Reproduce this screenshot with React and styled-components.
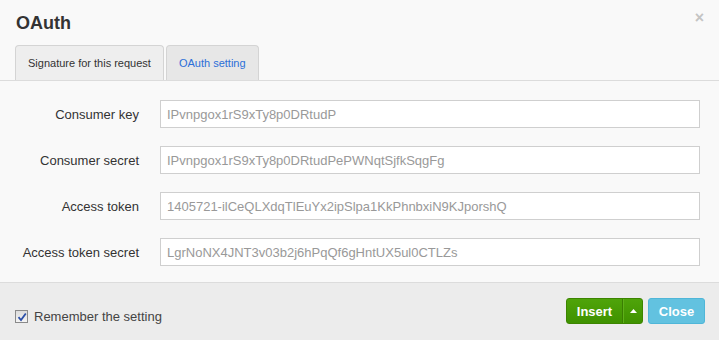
import React from "react";
import styled, { createGlobalStyle } from "styled-components";

const Global = createGlobalStyle`
  html, body { margin: 0; padding: 0; background: #f9f9f9; }
  body { font-family: "Liberation Sans", Arial, sans-serif; color: #333; }
  * { box-sizing: border-box; }
`;

const Dialog = styled.div`
  width: 719px;
  height: 340px;
  background: #f9f9f9;
  display: flex;
  flex-direction: column;
  overflow: hidden;
`;

const Header = styled.div`
  position: relative;
  padding: 12px 16px 0 16px;
`;

const Title = styled.h1`
  margin: 0;
  font-size: 18px;
  line-height: 22px;
  font-weight: bold;
  color: #333;
`;

const CloseX = styled.span`
  position: absolute;
  top: 10px;
  right: 15px;
  font-size: 16px;
  font-weight: bold;
  color: #c4c4c4;
  line-height: 16px;
`;

const Tabs = styled.div`
  display: flex;
  gap: 2px;
  margin-top: 11px;
  padding-left: 15px;
  border-bottom: 1px solid #dcdcdc;
`;

const Tab = styled.div`
  height: 35px;
  padding: 0 12px;
  display: flex;
  align-items: center;
  font-size: 11px;
  border: 1px solid #d4d4d4;
  border-bottom: none;
  border-radius: 4px 4px 0 0;
  background: ${(p) => (p.$active ? "#eeeeee" : "#e7e7e7")};
  color: ${(p) => (p.$active ? "#333" : "#2d6fd8")};
`;

const Form = styled.div`
  flex: 1;
  display: grid;
  grid-template-columns: 139px 1fr;
  column-gap: 21px;
  row-gap: 18px;
  align-content: start;
  padding: 19px 19px 0 0;
  border-bottom: 1px solid #dcdcdc;
`;

const Label = styled.label`
  font-size: 13px;
  color: #333;
  text-align: right;
  align-self: center;
`;

const Input = styled.input`
  height: 28px;
  width: 100%;
  border: 1px solid #cfcfcf;
  background: #fff;
  padding: 0 6px;
  font-family: "Liberation Sans", Arial, sans-serif;
  font-size: 13px;
  color: #999;
  outline: none;
`;

const Footer = styled.div`
  height: 57px;
  flex: none;
  background: #ececec;
  display: flex;
  align-items: flex-start;
  justify-content: space-between;
  padding: 15px 14px 0 15px;
`;

const Remember = styled.div`
  display: flex;
  align-items: center;
  gap: 6px;
  margin-top: 11px;
  font-size: 13px;
  color: #444;
`;

const Check = styled.span`
  width: 13px;
  height: 13px;
  border: 1px solid #8a8a8a;
  background: linear-gradient(#dcdcdc, #f4f4f4);
  display: flex;
  align-items: center;
  justify-content: center;
`;

const Buttons = styled.div`
  display: flex;
  gap: 5px;
`;

const Split = styled.div`
  display: flex;
  height: 26px;
  border: 1px solid #3c8500;
  border-radius: 3px;
  background: linear-gradient(#4fa40a, #3f9200);
  overflow: hidden;
`;

const SplitMain = styled.div`
  width: 56px;
  display: flex;
  align-items: center;
  justify-content: center;
  color: #fff;
  font-size: 13px;
  font-weight: bold;
  border-right: 1px solid #3a7e02;
`;

const SplitCaret = styled.div`
  width: 19px;
  display: flex;
  align-items: center;
  justify-content: center;
  border-left: 1px solid #5eb01a;
`;

const Button = styled.div`
  height: 26px;
  width: 57px;
  display: flex;
  align-items: center;
  justify-content: center;
  border: 1px solid #4fb6d8;
  border-radius: 3px;
  background: #62c2e0;
  color: #fff;
  font-size: 13px;
  font-weight: bold;
`;

const fields = [
  ["Consumer key", "IPvnpgox1rS9xTy8p0DRtudP"],
  ["Consumer secret", "IPvnpgox1rS9xTy8p0DRtudPePWNqtSjfkSqgFg"],
  ["Access token", "1405721-ilCeQLXdqTlEuYx2ipSlpa1KkPhnbxiN9KJporshQ"],
  ["Access token secret", "LgrNoNX4JNT3v03b2j6hPqQf6gHntUX5ul0CTLZs"],
];

export default function App() {
  return (
    <Dialog>
      <Global />
      <Header>
        <Title>OAuth</Title>
        <CloseX>×</CloseX>
      </Header>
      <Tabs>
        <Tab $active>Signature for this request</Tab>
        <Tab>OAuth setting</Tab>
      </Tabs>
      <Form>
        {fields.map(([l, v]) => (
          <React.Fragment key={l}>
            <Label>{l}</Label>
            <Input defaultValue={v} readOnly />
          </React.Fragment>
        ))}
      </Form>
      <Footer>
        <Remember>
          <Check>
            <svg width="10" height="10" viewBox="0 0 10 10">
              <path d="M1.5 5.2 L4 8 L8.8 1.5" fill="none" stroke="#2b4fa8" strokeWidth="1.8" />
            </svg>
          </Check>
          Remember the setting
        </Remember>
        <Buttons>
          <Split>
            <SplitMain>Insert</SplitMain>
            <SplitCaret>
              <svg width="7" height="4" viewBox="0 0 7 4">
                <path d="M0 4 L3.5 0 L7 4 Z" fill="#fff" />
              </svg>
            </SplitCaret>
          </Split>
          <Button>Close</Button>
        </Buttons>
      </Footer>
    </Dialog>
  );
}
